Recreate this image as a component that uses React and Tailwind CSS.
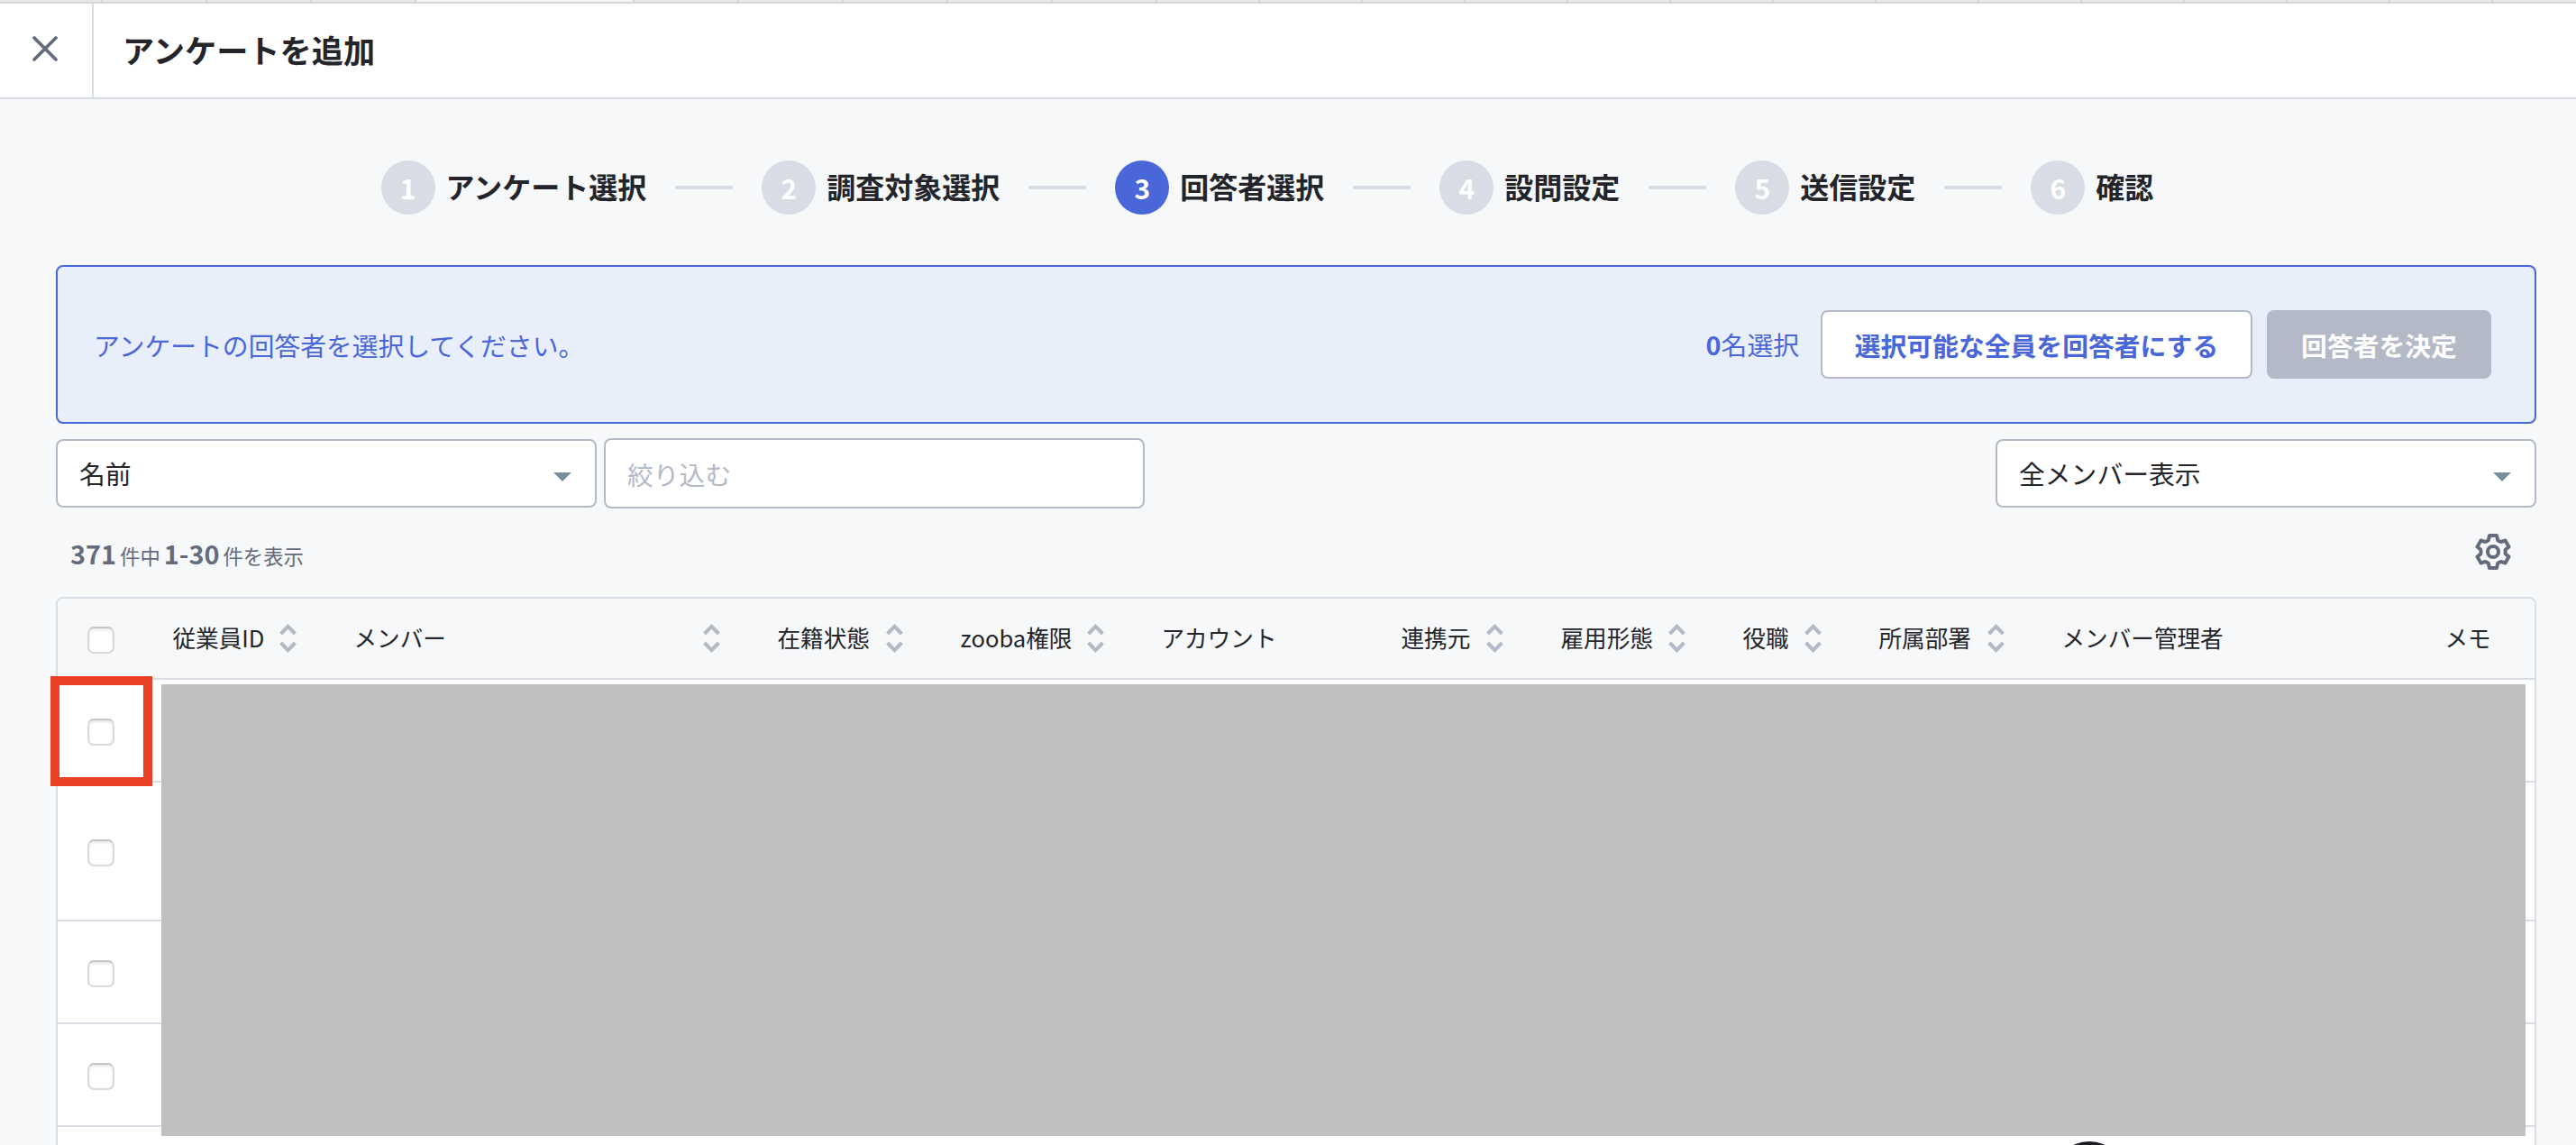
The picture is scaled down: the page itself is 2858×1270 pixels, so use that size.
import React from 'react';

const steps = ['アンケート選択', '調査対象選択', '回答者選択', '設問設定', '送信設定', '確認'];

const columns = [
  { label: '従業員ID', sort: true },
  { label: 'メンバー', sort: true },
  { label: '在籍状態', sort: true },
  { label: 'zooba権限', sort: true },
  { label: 'アカウント' },
  { label: '連携元', sort: true },
  { label: '雇用形態', sort: true },
  { label: '役職', sort: true },
  { label: '所属部署', sort: true },
  { label: 'メンバー管理者' },
  { label: 'メモ' },
];

const rowHeights = ['h-[114px]', 'h-[154px]', 'h-[114px]', 'h-[114px]'];

const tabWidths = [114, 116, 116, 116, 242, 116, 116, 116, 116, 116, ...Array(13).fill(114)];

const grid =
  'grid grid-cols-[97px_201px_470px_203px_223px_266px_177px_202px_151px_203px_425px_1fr]';

function Checkbox() {
  return (
    <span className="mt-1 ml-[33px] block size-[30px] rounded-[7px] border-2 border-[#d9d9d9] border-t-[#c6c6c6] bg-white shadow-[inset_0_2px_3px_rgba(0,0,0,0.1)]" />
  );
}

function SortIcon() {
  return (
    <svg className="h-8 w-[19px] shrink-0" viewBox="0 0 19 32" fill="none" stroke="#b3b9c7" strokeWidth="4">
      <path d="M1.6 11 9.5 2.8 17.4 11" />
      <path d="M1.6 21 9.5 29.200 17.4 21" />
    </svg>
  );
}

function Caret() {
  return (
    <svg className="mt-2 h-[10px] w-5" viewBox="0 0 20 10">
      <path d="M0 0h20L10 10z" fill="#78909c" />
    </svg>
  );
}

function Select({ label }) {
  return (
    <div className="flex h-[76px] w-[600px] items-center justify-between rounded-lg border-2 border-[#b3b9c7] bg-white pr-[26px] pl-6 text-[28.8px]">
      <span>{label}</span>
      <Caret />
    </div>
  );
}

export default function App() {
  return (
    <div className="relative h-[1270px] w-[2858px] overflow-hidden bg-[#f7f8fa] font-['Noto_Sans_CJK_JP','Noto_Sans',sans-serif] leading-normal text-[#23252b]">
      <div className="flex h-1 border-b-2 border-[#d6d6d6] bg-[#e8e8e8]">
        {tabWidths.map((w, i) => (
          <div
            key={i}
            className={'shrink-0 border-r-2 border-[#d2d2d2] ' + (i === 4 ? 'bg-[#f5f5f5]' : '')}
            style={{ width: w }}
          />
        ))}
      </div>
      <header className="flex h-[106px] items-stretch border-b-2 border-[#d7dce5] bg-white">
        <div className="flex w-[104px] items-center border-r-2 border-[#d7dbe6] pb-1 pl-[35px]">
          <svg className="size-[30px]" viewBox="0 0 30 30" stroke="#646b7d" strokeWidth="3.800" strokeLinecap="round">
            <path d="M3 3 27 27M27 3 3 27" />
          </svg>
        </div>
        <h1 className="flex items-center pb-px pl-8 text-[35.2px] font-bold">アンケートを追加</h1>
      </header>

      <ol className="mt-[68px] ml-[422.5px] flex h-[60px] items-center">
        {steps.map((s, i) => (
          <li key={s} className="flex items-center">
            {i > 0 && <span className="mx-8 h-1 w-16 bg-[#d8dce5]" />}
            <span
              className={
                'mr-3 flex size-[60px] items-center justify-center rounded-full text-[30px] font-bold text-white ' +
                (i === 2 ? 'bg-[#4a67d9]' : 'bg-[#d8dce5]')
              }
            >
              {i + 1}
            </span>
            <span className="pb-[5px] text-[32px] font-bold whitespace-nowrap">{s}</span>
          </li>
        ))}
      </ol>

      <main className="ml-[62px] w-[2752px]">
        <section className="mt-14 flex h-[176px] items-center rounded-lg border-2 border-[#4a67d9] bg-[#e8eefa] pr-12 pl-10 text-[28.8px] text-[#4a67d9]">
          <p className="pt-[2px]">アンケートの回答者を選択してください。</p>
          <p className="mr-6 ml-auto">
            <b>0</b>名選択
          </p>
          <button className="h-[76px] w-[479px] rounded-lg border-2 border-[#b3b9c7] bg-white pt-[2px] font-bold">
            選択可能な全員を回答者にする
          </button>
          <button className="ml-4 h-[76px] w-[249px] rounded-lg bg-[#b3b9c7] pt-[2px] font-bold text-white">
            回答者を決定
          </button>
        </section>

        <div className="mt-4 flex h-[78px] items-center">
          <Select label="名前" />
          <div className="mr-auto ml-2 flex h-[78px] w-[600px] items-center rounded-lg border-2 border-[#b3b9c7] bg-white pt-[2px] pl-6 text-[28.8px] text-[#b3b9c7]">
            絞り込む
          </div>
          <Select label="全メンバー表示" />
        </div>

        <div className="flex h-[98px] items-start justify-between pr-7 pl-4">
          <p className="mt-7 text-[22.4px] text-[#646b7d]">
            <b className="text-[28.8px]">371</b> <span className="-ml-px">件中</span>{' '}
            <b className="-ml-px text-[28.8px]">1-30</b> <span className="-ml-px">件を表示</span>
          </p>
          <svg className="mt-7 size-10" viewBox="0 0 40 40" fill="none" stroke="#646b7d" strokeWidth="4" strokeLinejoin="round">
            <path d="M16 2h8l1.200 5.200 3.200 1.900 5.100-1.600 4 6.900-3.900 3.400v4.400l3.900 3.400-4 6.900-5.100-1.600-3.200 1.900L24 38h-8l-1.200-5.200-3.200-1.900-5.100 1.600-4-6.900 3.900-3.400v-4.400l-3.900-3.400 4-6.900 5.100 1.600 3.200-1.900z" />
            <circle cx="20" cy="20" r="6" />
          </svg>
        </div>

        <div className="relative h-[620px] rounded-t-lg border-2 border-[#d8dce5] bg-white">
          <div className={grid + ' h-[90px] items-center rounded-t-lg border-b-2 border-[#d8dce5] bg-[#f7f8fa]'}>
            <Checkbox />
            {columns.map((c) => (
              <div key={c.label} className="flex items-center justify-between pr-[33px] pl-[30.5px] text-[25.6px] whitespace-nowrap">
                <span className="pb-[2px]">{c.label}</span>
                {c.sort && <SortIcon />}
              </div>
            ))}
          </div>
          {rowHeights.map((h, i) => (
            <div key={i} className={'flex items-center border-b-2 border-[#d8dce5] ' + h}>
              <Checkbox />
            </div>
          ))}
          <div className="absolute top-[95px] left-[115px] h-[501px] w-[2623px] bg-[#c0c0c0]" />
          <div className="absolute top-[86px] -left-2 h-[122px] w-[113px] border-10 border-[#ea4025]" />
        </div>
      </main>

      <div className="absolute top-[1266px] left-[2278px] size-20 rounded-full bg-[#1c1e21]" />
    </div>
  );
}
